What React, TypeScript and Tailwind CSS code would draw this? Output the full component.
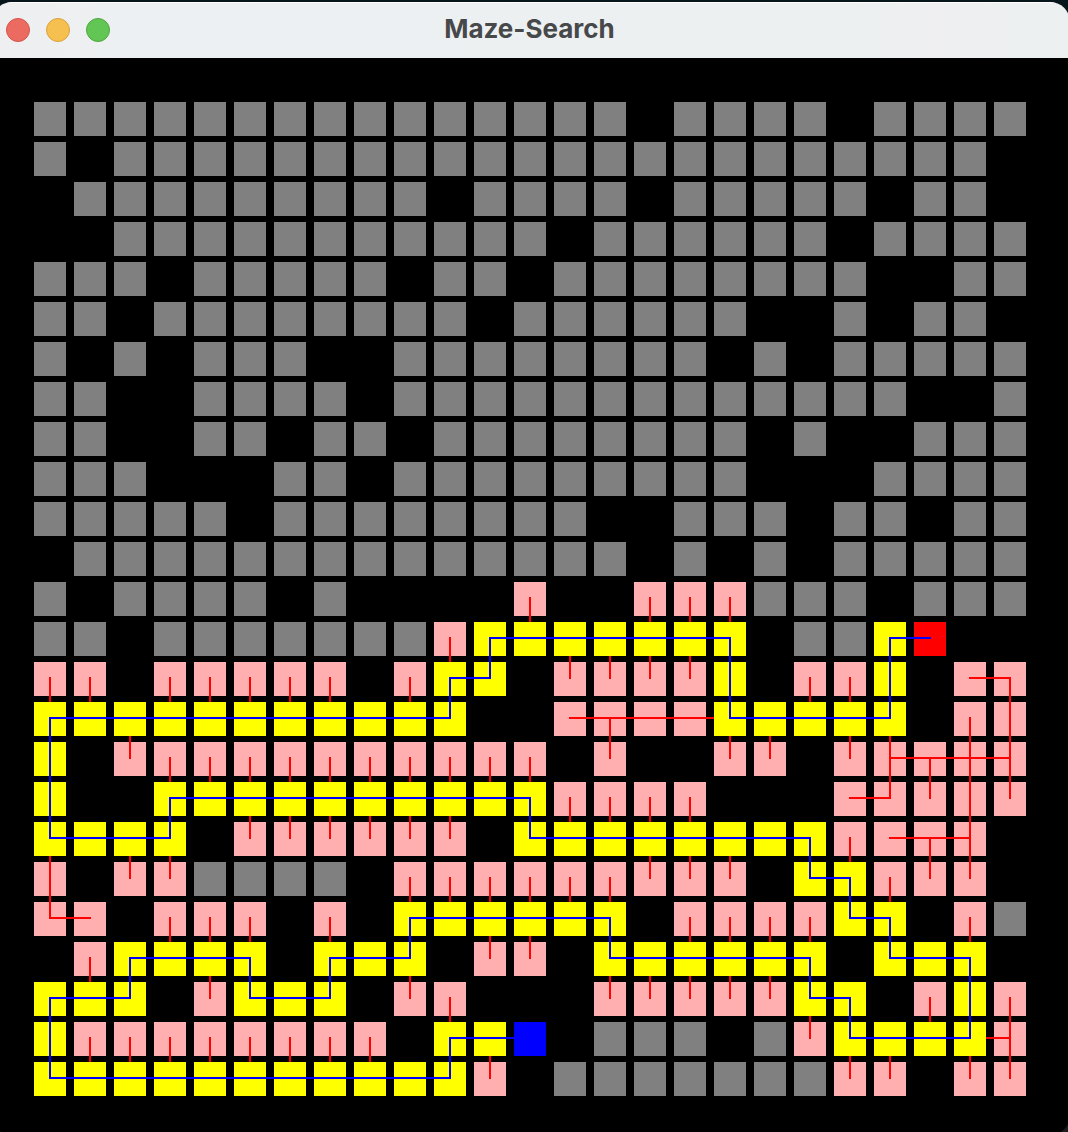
// '#': unvisited, 'Y': on the path, 'R': start, 'B': goal, '.': wall,
// u/d/l/r: visited, with the direction of the cell it was reached from.
const MAZE = [
  '###############.####.####',
  '#.######################.',
  '.#########.####.#####.##.',
  '..###########.######.####',
  '###.#####.##.########..##',
  '##.########.######..#.##.',
  '#.#.###..########.#.#####',
  '##..####.#############..#',
  '##..##.##.########.#..###',
  '###...##.#########...####',
  '#####.########..###.##.##',
  '.##############.#.#.#####',
  '#.####.#....d..ddd###.###',
  '##.#######dYYYYYYY.##YR..',
  'dd.ddddd.dYY.uuuuY.ddY.rd',
  'YYYYYYYYYYY..rrrrYYYYY.dd',
  'Y.udddddddddd.u..uu.uulll',
  'Y..YYYYYYYYYYdddd...ruuuu',
  'YYYY.uuuuuu.YYYYYYYYdrru.',
  'u.uu####.dddddduuu.YYduu.',
  'ul.ddd.d.YYYYYY.ddddYY.d#',
  '.dYYYY.YYY.uu.YYYYYY.YYY.',
  'YYY.uYYY.ud...uuuuuYY.dYd',
  'Ydddddddd.YYB.###.#uYYYYl',
  'YYYYYYYYYYYu.#######uu.uu',
];

const PATH: [number, number][] = [
  [22, 13], [21, 13], [21, 15], [17, 15], [17, 13], [11, 13], [11, 14], [10, 14], [10, 15],
  [0, 15], [0, 18], [3, 18], [3, 17], [12, 17], [12, 18], [19, 18], [19, 19], [20, 19],
  [20, 20], [21, 20], [21, 21], [23, 21], [23, 23], [20, 23], [20, 22], [19, 22], [19, 21],
  [14, 21], [14, 20], [9, 20], [9, 21], [7, 21], [7, 22], [5, 22], [5, 21], [2, 21],
  [2, 22], [0, 22], [0, 24], [10, 24], [10, 23], [12, 23],
];

const CELL: Record<string, string> = {
  '#': 'bg-[#808080]',
  '.': '',
  Y: 'relative z-10 bg-[#ffff00]',
  R: 'relative z-10 bg-[#ff0000]',
  B: 'relative z-10 bg-[#0000ff]',
};

const STEP: Record<string, string> = { u: 'v-40', d: 'v40', l: 'h-40', r: 'h40' };

const center = (index: number) => 16 + index * 40;

const links = MAZE.flatMap((row, r) =>
  [...row].map((c, col) => (STEP[c] ? `M${center(col)} ${center(r)}${STEP[c]}` : '')),
).join('');

const route = PATH.map(([c, r]) => `${center(c)},${center(r)}`).join(' ');

function TitleBar() {
  return (
    <header className="relative flex h-14 shrink-0 items-center bg-[linear-gradient(90deg,#efeff1_0%,#edf0f2_12%,#ecf0f1_80%,#efeff1_88%,#ecf0f1_97%)] shadow-[inset_0_1px_0_#ffffff]">
      <div className="flex gap-4 pl-3.5">
        <span className="size-6 rounded-full border border-[#d5544a] bg-[#ec6b60]" />
        <span className="size-6 rounded-full border border-[#d9a33f] bg-[#f5c04f]" />
        <span className="size-6 rounded-full border border-[#50a73f] bg-[#61c654]" />
      </div>
      <h1 className="absolute inset-x-0 pr-[3px] pb-0.5 text-center font-['Inter',sans-serif] text-[26px] leading-8 font-bold text-[#474849]">
        Maze-Search
      </h1>
    </header>
  );
}

function Maze() {
  return (
    <div className="relative grid grid-cols-[repeat(25,32px)] gap-x-2 gap-y-1.5">
      {MAZE.flatMap((row, r) =>
        [...row].map((c, col) => (
          <div key={`${r}-${col}`} className={`h-[34px] ${CELL[c] ?? 'bg-[#ffafaf]'}`} />
        )),
      )}
      <svg className="absolute top-0 left-0" width="992" height="994" fill="none">
        <path d={links} stroke="#ff0000" strokeWidth="2" strokeLinecap="square" />
      </svg>
      <svg className="absolute top-0 left-0 z-20" width="992" height="994" fill="none">
        <polyline points={route} stroke="#0000ff" strokeWidth="2" strokeLinecap="square" />
      </svg>
    </div>
  );
}

export default function App() {
  return (
    <div className="h-[1132px] w-[1068px] overflow-hidden bg-[linear-gradient(180deg,#06151c_0%,#1a1a1f_100%)] pt-0.5">
      <div className="-ml-2 flex h-[1133px] w-[1078px] flex-col overflow-hidden rounded-[20px] bg-black">
        <TitleBar />
        <main className="flex-1 pt-11 pl-[42px]">
          <Maze />
        </main>
      </div>
    </div>
  );
}
